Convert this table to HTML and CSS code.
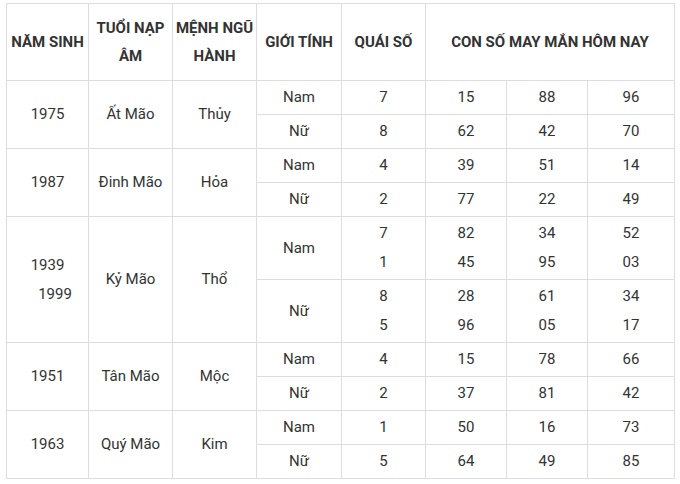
FILE: index.html
```html
<!DOCTYPE html>
<html lang="vi">
<head>
<meta charset="utf-8">
<link rel="stylesheet" href="styles.css">
</head>
<body>
<div class="wrap">
<table class="lucky">
<colgroup>
<col class="c1"><col class="c2"><col class="c3"><col class="c4"><col class="c5"><col class="c6"><col class="c7"><col class="c8">
</colgroup>
<thead>
<tr>
<th>NĂM SINH</th>
<th>TUỔI NẠP ÂM</th>
<th>MỆNH NGŨ HÀNH</th>
<th>GIỚI TÍNH</th>
<th>QUÁI SỐ</th>
<th colspan="3">CON SỐ MAY MẮN HÔM NAY</th>
</tr>
</thead>
<tbody>
<tr><td rowspan="2">1975</td><td rowspan="2">Ất Mão</td><td rowspan="2">Thủy</td><td>Nam</td><td>7</td><td>15</td><td>88</td><td>96</td></tr>
<tr><td>Nữ</td><td>8</td><td>62</td><td>42</td><td>70</td></tr>
<tr><td rowspan="2">1987</td><td rowspan="2">Đinh Mão</td><td rowspan="2">Hỏa</td><td>Nam</td><td>4</td><td>39</td><td>51</td><td>14</td></tr>
<tr><td>Nữ</td><td>2</td><td>77</td><td>22</td><td>49</td></tr>
<tr><td rowspan="2" class="multi"><span class="y1">1939</span><br><span class="y2">1999</span></td><td rowspan="2">Kỷ Mão</td><td rowspan="2">Thổ</td><td class="multi">Nam</td><td class="multi">7<br>1</td><td class="multi">82<br>45</td><td class="multi">34<br>95</td><td class="multi">52<br>03</td></tr>
<tr><td class="multi">Nữ</td><td class="multi">8<br>5</td><td class="multi">28<br>96</td><td class="multi">61<br>05</td><td class="multi">34<br>17</td></tr>
<tr><td rowspan="2">1951</td><td rowspan="2">Tân Mão</td><td rowspan="2">Mộc</td><td>Nam</td><td>4</td><td>15</td><td>78</td><td>66</td></tr>
<tr><td>Nữ</td><td>2</td><td>37</td><td>81</td><td>42</td></tr>
<tr><td rowspan="2">1963</td><td rowspan="2">Quý Mão</td><td rowspan="2">Kim</td><td>Nam</td><td>1</td><td>50</td><td>16</td><td>73</td></tr>
<tr><td>Nữ</td><td>5</td><td>64</td><td>49</td><td>85</td></tr>
</tbody>
</table>
</div>
</body>
</html>
```
FILE: styles.css
```css
html, body {
  margin: 0;
  padding: 0;
  background: #fff;
}
.wrap {
  padding: 3px 0 0 6px;
}
.lucky {
  border-collapse: collapse;
  table-layout: fixed;
  width: 668px;
  font-family: Roboto, "Liberation Sans", sans-serif;
  font-size: 15px;
  color: #333;
}
.c1 { width: 82px; }
.c2 { width: 84px; }
.c3 { width: 84px; }
.c4 { width: 85px; }
.c5 { width: 84px; }
.c6 { width: 81px; }
.c7 { width: 81px; }
.c8 { width: 87px; }
.lucky th, .lucky td {
  border: 1px solid #dddddd;
  text-align: center;
  vertical-align: middle;
}
.lucky th {
  font-weight: bold;
  line-height: 28px;
  padding: 10px 2px;
}
.lucky td {
  line-height: 27px;
  padding: 3px 2px;
  font-weight: normal;
}
.lucky td.multi {
  line-height: 29px;
  padding: 2px 2px;
}
.y1 { display: inline-block; }
.y2 { display: inline-block; padding-left: 15px; }
```
